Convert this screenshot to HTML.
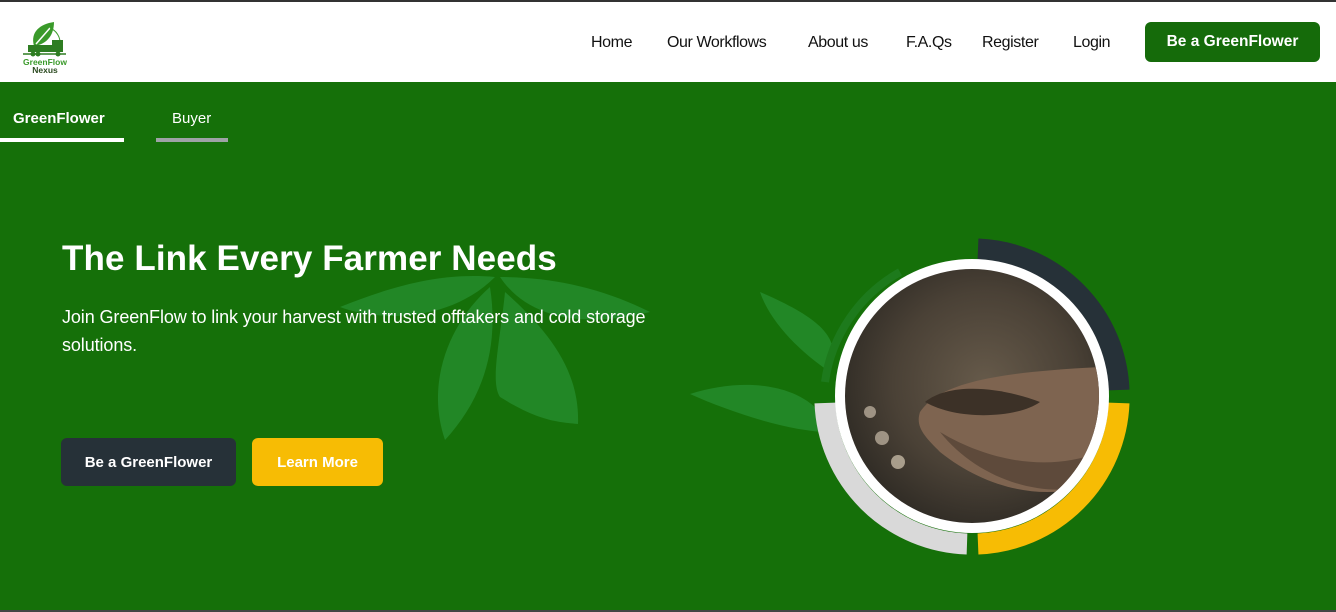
<!DOCTYPE html>
<html><head><meta charset="utf-8"><style>
*{margin:0;padding:0;box-sizing:border-box}
body{width:1336px;height:612px;overflow:hidden;font-family:"Liberation Sans",sans-serif;background:#157009;position:relative}
.top{position:absolute;left:0;top:0;width:1336px;height:2px;background:#333}
header{position:absolute;left:0;top:2px;width:1336px;height:80px;background:#fff}
.nav a{position:absolute;top:32px;font-size:16px;color:#111;text-decoration:none;letter-spacing:-0.4px}
.btn{position:absolute;border-radius:6px;color:#fff;font-weight:bold;font-size:15px;display:flex;align-items:center;justify-content:center}
.hero{position:absolute;left:0;top:82px;width:1336px;height:528px;background:#157009}
.bottom{position:absolute;left:0;top:610px;width:1336px;height:2px;background:#444}
</style></head><body>
<div class="top"></div>
<header>
<svg style="position:absolute;left:20px;top:18px" width="50" height="56" viewBox="0 0 50 56">
<path d="M14 26 C10 12 20 4 34 2 C34 14 28 24 14 26Z" fill="#3a9a2a"/>
<path d="M16 24 L30 8" stroke="#fff" stroke-width="1.5"/>
<path d="M30 8 A16 16 0 0 1 40 24" stroke="#3a9a2a" stroke-width="1" fill="none"/>
<rect x="8" y="25" width="24" height="7" fill="#2e7d22"/>
<rect x="32" y="20" width="11" height="12" fill="#2e7d22"/>
<line x1="3" y1="34" x2="46" y2="34" stroke="#2e7d22" stroke-width="1.5"/>
<circle cx="13" cy="34" r="2.5" fill="#2e7d22"/><circle cx="18" cy="34" r="2.5" fill="#2e7d22"/><circle cx="38" cy="34" r="2.5" fill="#2e7d22"/>
<text x="25" y="45" font-size="8.5" font-weight="bold" fill="#3a9a2a" text-anchor="middle" font-family="Liberation Sans">GreenFlow</text>
<text x="25" y="53" font-size="8.5" font-weight="bold" fill="#2b4a20" text-anchor="middle" font-family="Liberation Sans">Nexus</text>
</svg>
<div class="nav">
<a style="left:591px">Home</a>
<a style="left:667px">Our Workflows</a>
<a style="left:808px">About us</a>
<a style="left:906px">F.A.Qs</a>
<a style="left:982px">Register</a>
<a style="left:1073px">Login</a>
</div>
<div class="btn" style="left:1145px;top:20px;width:175px;height:40px;background:#156b0a;font-size:15.5px">Be a GreenFlower</div>
</header>
<div class="hero">
<div style="position:absolute;left:13px;top:28px;color:#fff;font-weight:bold;font-size:15px">GreenFlower</div>
<div style="position:absolute;left:0;top:56px;width:124px;height:4px;background:#fff"></div>
<div style="position:absolute;left:172px;top:28px;color:#fff;font-size:15px">Buyer</div>
<div style="position:absolute;left:156px;top:56px;width:72px;height:4px;background:#9ea3a6"></div>
<svg style="position:absolute;left:0;top:0" width="1336" height="528">
<g fill="#228726">
<path d="M495 195 C440 190 390 205 340 225 C380 240 450 240 495 195Z"/>
<path d="M500 195 C530 240 590 245 650 230 C600 205 550 195 500 195Z"/>
<path d="M490 205 C450 240 425 300 445 358 C480 320 500 270 490 205Z"/>
<path d="M505 210 C500 260 490 300 500 315 C540 340 560 340 578 342 C580 290 550 250 505 210Z"/>
<path d="M760 210 C770 240 800 270 830 290 C840 260 830 240 760 210Z"/>
<path d="M690 312 C730 330 790 350 830 350 C820 310 760 290 690 312Z"/>
</g>
<path d="M825 300 A150 150 0 0 1 900 190" stroke="#1d7a1c" stroke-width="8" fill="none"/>
<path d="M978 167 A147 147 0 0 1 1119 308" stroke="#263138" stroke-width="21" fill="none"/>
<path d="M1119 321 A147 147 0 0 1 978 462" stroke="#f7bc04" stroke-width="21" fill="none"/>
<path d="M967 462 A147 147 0 0 1 825 321" stroke="#d9d9d9" stroke-width="21" fill="none"/>
<defs>
<radialGradient id="ph" cx="0.55" cy="0.45" r="0.6"><stop offset="0" stop-color="#665a4a"/><stop offset="0.6" stop-color="#4a4136"/><stop offset="1" stop-color="#2e2a24"/></radialGradient>
<clipPath id="cc"><circle cx="972" cy="314" r="127"/></clipPath>
</defs>
<circle cx="972" cy="314" r="137" fill="#fff"/>
<circle cx="972" cy="314" r="127" fill="url(#ph)"/>
<g clip-path="url(#cc)">
<path d="M920 330 C940 300 1000 290 1100 285 L1100 400 C1050 420 990 410 940 370 C925 355 915 345 920 330Z" fill="#7e6450"/>
<path d="M925 320 C950 300 1000 305 1040 320 C1020 335 960 340 925 320Z" fill="#3c3127"/>
<path d="M940 350 C990 380 1050 390 1100 370 L1100 400 C1050 420 980 400 940 350Z" fill="#5e4a3b"/>
<circle cx="870" cy="330" r="6" fill="#c8bba8" opacity=".7"/>
<circle cx="882" cy="356" r="7" fill="#c8bba8" opacity=".7"/>
<circle cx="898" cy="380" r="7" fill="#d6c9b4" opacity=".7"/>
</g>
</svg>
<div style="position:absolute;left:62px;top:157px;color:#fff;font-weight:bold;font-size:35px;letter-spacing:0.1px">The Link Every Farmer Needs</div>
<div style="position:absolute;left:62px;top:221px;width:620px;color:#fff;font-size:18px;line-height:28px;letter-spacing:-0.1px">Join GreenFlow to link your harvest with trusted offtakers and cold storage solutions.</div>
<div class="btn" style="left:61px;top:356px;width:175px;height:48px;background:#263138">Be a GreenFlower</div>
<div class="btn" style="left:252px;top:356px;width:131px;height:48px;background:#f7bc04">Learn More</div>
</div>
<div class="bottom"></div>
</body></html>
